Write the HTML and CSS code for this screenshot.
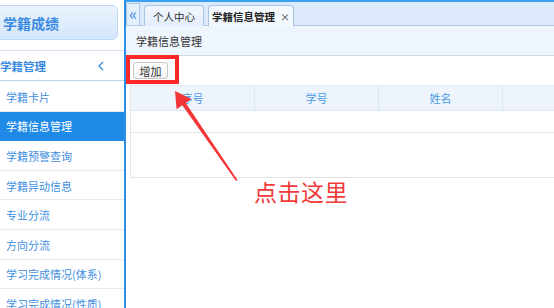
FILE: index.html
```html
<!DOCTYPE html>
<html lang="zh-CN">
<head>
<meta charset="utf-8">
<link rel="stylesheet" href="styles.css">
</head>
<body>
<div class="app">
  <aside class="sidebar">
    <div class="brand"><span>学籍成绩</span></div>
    <div class="group-title"><span class="gt-text">学籍管理</span><svg class="chev" width="6" height="10" viewBox="0 0 6 10"><path d="M5 1 L1 5 L5 9" fill="none" stroke="#3d8fe3" stroke-width="1.4"/></svg></div>
    <ul class="menu">
      <li>学籍卡片</li>
      <li class="active">学籍信息管理</li>
      <li>学籍预警查询</li>
      <li>学籍异动信息</li>
      <li>专业分流</li>
      <li>方向分流</li>
      <li>学习完成情况(体系)</li>
      <li>学习完成情况(性质)</li>
    </ul>
  </aside>
  <main class="main">
    <div class="tabbar">
      <div class="collapse">«</div>
      <div class="tab">个人中心</div>
      <div class="tab active">学籍信息管理<span class="close">×</span></div>
    </div>
    <div class="crumb">学籍信息管理</div>
    <div class="toolbar"><button class="btn">增加</button></div>
    <div class="grid">
      <div class="grid-head">
        <div class="cell">序号</div>
        <div class="cell">学号</div>
        <div class="cell">姓名</div>
        <div class="cell"></div>
      </div>
      <div class="grid-row"></div>
      <div class="grid-foot"></div>
    </div>
  </main>
  <div class="mark-box"></div>
  <svg class="arrow" width="554" height="308" viewBox="0 0 554 308">
    <polygon points="175,91 176.6,109.3 182.3,105.3 236,181 237.5,180 185.7,103.1 191.4,99.1" fill="#f23535"/>
  </svg>
  <div class="note">点击这里</div>
</div>
</body>
</html>
```
FILE: styles.css
```css
* { box-sizing: border-box; margin: 0; padding: 0; }
html, body { width: 554px; height: 308px; overflow: hidden; background: #fff; }
body { font-family: "Noto Sans CJK SC", "Noto Sans", sans-serif; font-size: 11px; color: #333; }

.app { display: flex; width: 554px; height: 308px; position: relative; }

.sidebar {
  width: 126px; flex: none; border-right: 2px solid #2b8fe6; background: #fff; overflow: hidden;
}
.brand {
  margin: 5px 0 10px -6px; width: 124px; height: 35px; border-radius: 6px;
  border: 1px solid #bcd7f3;
  background: linear-gradient(#eaf3fd, #d4e6fa);
  display: flex; align-items: center; padding-left: 8px;
  font-size: 14px; font-weight: bold; color: #3a8be0;
}
.group-title {
  height: 31px; border-top: 1px solid #d3e2f3; border-bottom: 1px solid #bad3ee;
  display: flex; align-items: center; justify-content: space-between; padding-right: 20px;
}
.gt-text { margin-left: 0; font-size: 11.5px; font-weight: bold; color: #3a8be0; }
.menu { list-style: none; padding-top: 1px; }
.menu li {
  height: 29.6px; border-bottom: 1px solid #e4edf7; padding-left: 6px; padding-top: 1px;
  display: flex; align-items: center; color: #3f8fe0; white-space: nowrap;
}
.menu li.active { background: #1f8ae6; color: #fff; border-bottom-color: #1f8ae6; }

.main { flex: 1; min-width: 0; display: flex; flex-direction: column; overflow: hidden; }
.tabbar {
  height: 26px; border-top: 2px solid #3aa0f0; border-bottom: 1px solid #b4cbe8;
  background: #dce9fb; display: flex; align-items: flex-end;
}
.collapse {
  width: 14px; height: 22px; align-self: flex-end;
  border: 1px solid #a9c7ea; border-bottom: none; background: #e4effc;
  color: #3a86dc; font-size: 17px; line-height: 18px; text-align: center;
}
.tab {
  height: 21px; margin-left: 4px; margin-bottom: -1px;
  border: 1px solid #a9c4e6; border-bottom: none; border-radius: 4px 4px 0 0;
  background: linear-gradient(#f2f7fe, #e3edfb);
  display: flex; align-items: center; justify-content: center; white-space: nowrap; color: #333;
  width: 60px; font-size: 10.5px;
}
.tab.active { width: 86px; background: #f3f8fe; font-weight: bold; color: #222; }
.close { font-weight: normal; margin-left: 5px; font-size: 10px; color: #444; }

.crumb {
  height: 30px; background: #eef5fd; border-bottom: 1px solid #cfd7e1;
  padding-left: 10px; display: flex; align-items: center; color: #333;
}
.toolbar { height: 29px; padding: 6px 0 0 7px; }
.btn {
  width: 35px; height: 17px; border: 1px solid #c6c6c6; border-radius: 3px;
  background: linear-gradient(#fff, #f3f3f3); font: inherit; font-size: 11px; color: #333;
  display: flex; align-items: center; justify-content: center;
}

.grid { margin-left: 4px; border-left: 1px solid #e5e5e5; width: 500px; }
.grid-head {
  display: flex; height: 26px; background: #edf4fc;
  border-top: 1px solid #e4e9ef; border-bottom: 1px solid #e0e6ee;
}
.grid-head .cell {
  width: 124px; flex: none; border-right: 1px solid #dde5ee;
  display: flex; align-items: center; justify-content: center; color: #4a9ae6;
}
.grid-row { height: 22px; border-bottom: 1px solid #e6e6e6; }
.grid-foot { height: 45px; border-bottom: 1px solid #e2e2e2; }

.mark-box {
  position: absolute; left: 126px; top: 55px; width: 53px; height: 29px;
  border: 4px solid #ff2727;
}
.arrow { position: absolute; left: 0; top: 0; pointer-events: none; }
.note {
  position: absolute; left: 254px; top: 176px;
  font-size: 23px; color: #f23a3a; letter-spacing: 0.5px; line-height: 30px;
}
```
